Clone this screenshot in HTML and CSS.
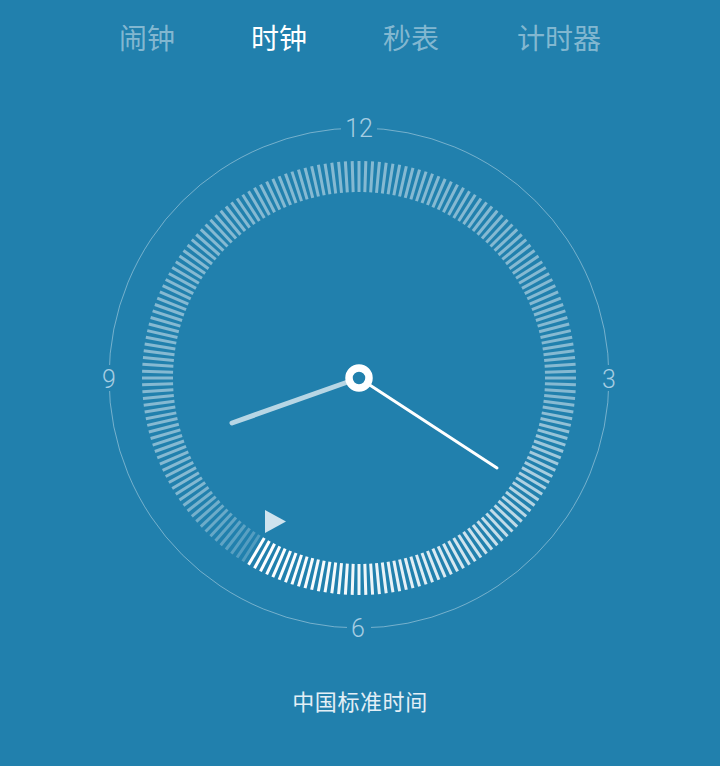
FILE: index.html
```html
<!DOCTYPE html>
<html lang="zh-CN">
<head>
<meta charset="utf-8">
<title>时钟</title>
<link rel="stylesheet" href="styles.css">
</head>
<body>
<nav class="tabs">
  <span class="tab">闹钟</span>
  <span class="tab active">时钟</span>
  <span class="tab">秒表</span>
  <span class="tab wide">计时器</span>
</nav>
<main class="clock-wrap">
  <svg class="clock" viewBox="-260 -260 520 520" width="520" height="520">
    <circle class="rim" cx="0" cy="0" r="250"></circle>
    <rect class="gap" x="-18" y="-262" width="36" height="24"></rect>
    <rect class="gap" x="-12" y="238" width="24" height="24"></rect>
    <rect class="gap" x="-262" y="-13" width="24" height="26"></rect>
    <rect class="gap" x="238" y="-13" width="24" height="26"></rect>
    <text class="num" x="0" y="-250">12</text>
    <text class="num" x="250" y="1">3</text>
    <text class="num" x="-1" y="250">6</text>
    <text class="num" x="-250" y="1">9</text>
    <g id="ticks"></g>
    <polygon class="second" points="-94,132 -94,155 -73,143.5"></polygon>
    <line class="hour" x1="0" y1="0" x2="-127" y2="45"></line>
    <line class="minute" x1="0" y1="0" x2="138" y2="90"></line>
    <circle class="hub" cx="0" cy="0" r="10"></circle>
  </svg>
</main>
<p class="zone">中国标准时间</p>
<script src="script.js"></script>
</body>
</html>
```

FILE: styles.css
```css
html, body {
  margin: 0;
  background: #2180ad;
}
body {
  width: 720px;
  height: 766px;
  overflow: hidden;
  font-family: "Noto Sans CJK SC", "Noto Sans", sans-serif;
}
.tabs {
  display: flex;
  justify-content: center;
  gap: 76px;
  padding-top: 22px;
  font-size: 28px;
  line-height: 30px;
  color: rgba(255, 255, 255, 0.45);
}
.tab.active {
  color: #ffffff;
}
.tab.wide {
  margin-left: 2px;
}
.clock-wrap {
  display: flex;
  justify-content: center;
  padding-right: 2px;
  margin-top: 66px;
}
.clock {
  display: block;
  overflow: visible;
}
.rim {
  fill: none;
  stroke: rgba(255, 255, 255, 0.38);
  stroke-width: 1;
}
.gap {
  fill: #2180ad;
}
.num {
  font-family: Roboto, "Liberation Sans", sans-serif;
  font-weight: 300;
  font-size: 25px;
  fill: #a6cde2;
  text-anchor: middle;
  dominant-baseline: central;
}
.tick {
  stroke-width: 3;
}
.second {
  fill: #cfe3ee;
}
.hour {
  stroke: rgba(255, 255, 255, 0.68);
  stroke-width: 5;
  stroke-linecap: round;
}
.minute {
  stroke: #ffffff;
  stroke-width: 3;
  stroke-linecap: round;
}
.hub {
  fill: #2180ad;
  stroke: #ffffff;
  stroke-width: 7.5;
}
.zone {
  margin: 47px 0 0;
  text-align: center;
  font-size: 22px;
  line-height: 30px;
  letter-spacing: 0.6px;
  color: #e3eff6;
}
```

FILE: script.js
```js
(function () {
  var g = document.getElementById('ticks');
  var ns = 'http://www.w3.org/2000/svg';
  var N = 200, step = 360 / N;
  var hand = 210.6;
  var rIn = 186, rOut = 217;
  var base = [133, 185, 210];
  for (var i = 0; i < N; i++) {
    var a = i * step;
    var rad = a * Math.PI / 180;
    var sx = Math.sin(rad), sy = -Math.cos(rad);
    var line = document.createElementNS(ns, 'line');
    line.setAttribute('x1', (sx * rIn).toFixed(2));
    line.setAttribute('y1', (sy * rIn).toFixed(2));
    line.setAttribute('x2', (sx * rOut).toFixed(2));
    line.setAttribute('y2', (sy * rOut).toFixed(2));
    line.setAttribute('class', 'tick');
    var col = base.slice(), op = 1;
    var behind = hand - a;
    if (behind >= -0.01 && behind <= 115) {
      var t = behind / 115;
      var w = 1 - Math.pow(t, 1.6);
      col = [0, 1, 2].map(function (k) { return Math.round(base[k] + (255 - base[k]) * w); });
    } else {
      var ahead = a - hand;
      if (ahead > 0 && ahead < 28) {
        op = 0.45 + 0.55 * (ahead / 28);
      }
    }
    line.setAttribute('stroke', 'rgb(' + col.join(',') + ')');
    line.setAttribute('stroke-opacity', op.toFixed(2));
    g.appendChild(line);
  }
})();
```
